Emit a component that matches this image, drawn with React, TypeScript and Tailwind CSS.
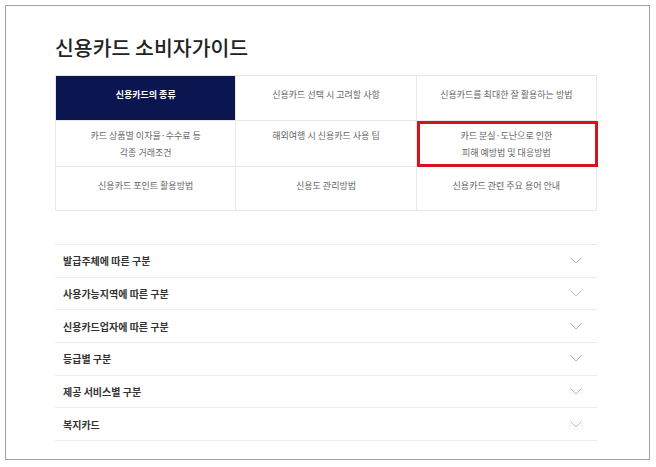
const GUIDE_MENU = [
  { label: "신용카드의 종류", active: true, pt: "pt-[10px]" },
  { label: "신용카드 선택 시 고려할 사항", pt: "pt-[10px]" },
  { label: "신용카드를 최대한 잘 활용하는 방법", pt: "pt-[10px]" },
  { label: "카드 상품별 이자율·수수료 등\n각종 거래조건", pt: "pt-[6px]" },
  { label: "해외여행 시 신용카드 사용 팁", pt: "pt-[6px]" },
  { label: "카드 분실·도난으로 인한\n피해 예방법 및 대응방법", pt: "pt-[6px]", marked: true },
  { label: "신용카드 포인트 활용방법", pt: "pt-[10px]" },
  { label: "신용도 관리방법", pt: "pt-[10px]" },
  { label: "신용카드 관련 주요 용어 안내", pt: "pt-[10px]" },
]

const SECTIONS = [
  "발급주체에 따른 구분",
  "사용가능지역에 따른 구분",
  "신용카드업자에 따른 구분",
  "등급별 구분",
  "제공 서비스별 구분",
  "복지카드",
]

function Chevron() {
  return (
    <svg width="12" height="7" viewBox="0 0 12 7" fill="none">
      <polyline points="0.5,0.5 6,6 11.5,0.5" stroke="#b8b8b8" strokeWidth="1" />
    </svg>
  )
}

export default function App() {
  return (
    <div className="min-h-screen bg-white pt-[5px] pl-[5px]" style={{ fontFamily: '"Noto Sans CJK KR", "Noto Sans", sans-serif' }}>
      <div className="w-[645px] h-[455px] border border-[#9ba3a9] bg-white pl-[49px] pt-[27px]">
        {/* Title */}
        <h1 className="text-[20.5px] leading-[28px] font-medium text-[#222] tracking-[0px]">신용카드 소비자가이드</h1>

        {/* Guide menu */}
        <div className="mt-[14px] w-[542px] grid grid-cols-3 grid-rows-[45px_46px_44px] border-t border-l border-[#e8e8e8]">
          {GUIDE_MENU.map((item) => (
            <div
              key={item.label}
              className={`relative border-r border-b border-[#e8e8e8] text-center text-[9px] leading-[17px] whitespace-pre-line ${item.pt} ${
                item.active ? "bg-[#0b1651] text-white font-semibold border-[#0b1651]" : "text-[#666]"
              }`}
            >
              {item.label}
              {item.marked && (
                <div className="absolute left-0 top-0 right-[-2px] bottom-[-1px] border-[3px] border-[#d6141d]" />
              )}
            </div>
          ))}
        </div>

        {/* Accordion */}
        <div className="mt-[33px] w-[542px] border-t border-[#ececec]">
          {SECTIONS.map((s) => (
            <div key={s} className="h-[32.67px] border-b border-[#ececec] flex items-center justify-between pl-[8px] pr-[15px]">
              <span className="text-[10px] font-semibold text-[#333]">{s}</span>
              <Chevron />
            </div>
          ))}
        </div>
      </div>
    </div>
  )
}
